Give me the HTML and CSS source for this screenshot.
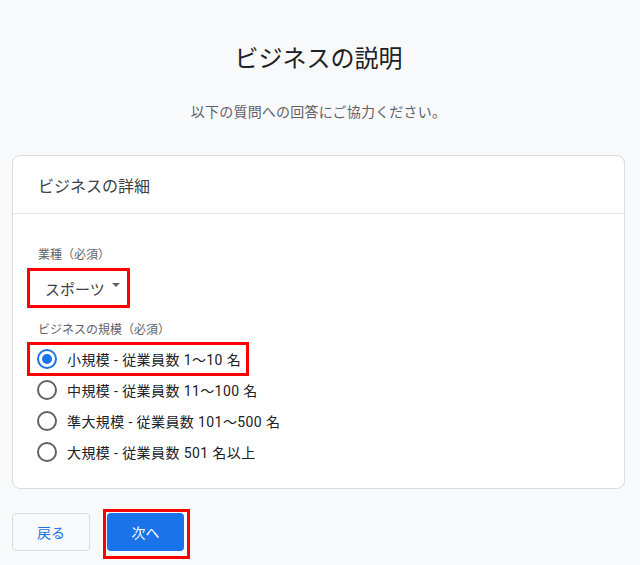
FILE: index.html
```html
<!DOCTYPE html>
<html lang="ja">
<head>
<meta charset="utf-8">
<link rel="stylesheet" href="styles.css">
</head>
<body>
<main class="page">
  <h1 class="title">ビジネスの説明</h1>
  <p class="subtitle">以下の質問への回答にご協力ください。</p>
  <section class="card">
    <div class="card-header">ビジネスの詳細</div>
    <div class="card-body">
      <div class="label">業種（必須）</div>
      <div class="dropdown">
        <span class="dropdown-text">スポーツ</span>
        <span class="caret"></span>
      </div>
      <div class="label label-size">ビジネスの規模（必須）</div>
      <div class="radios">
        <div class="radio-row highlighted"><span class="radio checked"></span><span class="radio-text">小規模 - 従業員数 1～10 名</span></div>
        <div class="radio-row"><span class="radio"></span><span class="radio-text">中規模 - 従業員数 11～100 名</span></div>
        <div class="radio-row"><span class="radio"></span><span class="radio-text">準大規模 - 従業員数 101～500 名</span></div>
        <div class="radio-row"><span class="radio"></span><span class="radio-text">大規模 - 従業員数 501 名以上</span></div>
      </div>
    </div>
  </section>
  <div class="actions">
    <button class="btn btn-back">戻る</button>
    <span class="next-wrap"><button class="btn btn-next">次へ</button></span>
  </div>
</main>
</body>
</html>
```
FILE: styles.css
```css
html, body {
  margin: 0;
  padding: 0;
  background: #f8f9fa;
  font-family: Roboto, "Noto Sans CJK JP", "Noto Sans", sans-serif;
}
.page {
  padding: 43px 15px 0 12px;
}
.title {
  margin: 0;
  text-align: center;
  font-size: 24px;
  line-height: 32px;
  font-weight: 400;
  color: #202124;
}
.subtitle {
  margin: 27px 0 0;
  text-align: center;
  font-size: 14px;
  line-height: 20px;
  letter-spacing: 0.2px;
  color: #5f6368;
}
.card {
  margin-top: 33px;
  background: #fff;
  border: 1px solid #dadce0;
  border-radius: 8px;
}
.card-header {
  height: 57px;
  display: flex;
  align-items: center;
  padding: 0 25px;
  font-size: 16px;
  color: #3c4043;
  border-bottom: 1px solid #e3e5e8;
}
.card-body {
  padding: 33px 25px 22px;
}
.label {
  font-size: 12px;
  line-height: 16px;
  color: #5f6368;
}
.label-size {
  margin-top: 14px;
}
.dropdown {
  margin: 5px 0 0 -11px;
  height: 34px;
  width: 82px;
  border: 3px solid #f00;
  display: flex;
  align-items: center;
  padding-left: 15px;
  box-sizing: content-box;
}
.dropdown-text {
  font-size: 15px;
  color: #3c4043;
}
.caret {
  margin-left: 7px;
  margin-top: -6px;
  width: 0;
  height: 0;
  border-left: 4px solid transparent;
  border-right: 4px solid transparent;
  border-top: 4px solid #5f6368;
}
.radios {
  margin: 7px 0 0 -8px;
  display: flex;
  flex-direction: column;
  gap: 3px;
}
.radio-row {
  height: 28px;
  display: flex;
  align-items: center;
  padding-left: 7px;
  align-self: flex-start;
  padding-right: 5px;
}
.radio-row.highlighted {
  outline: 3px solid #f00;
}
.radio {
  width: 16px;
  height: 16px;
  border: 2px solid #5f6368;
  border-radius: 50%;
  flex: none;
  position: relative;
}
.radio.checked {
  border-color: #1a73e8;
}
.radio.checked::after {
  content: "";
  position: absolute;
  left: 3px;
  top: 3px;
  width: 10px;
  height: 10px;
  border-radius: 50%;
  background: #1a73e8;
}
.radio-text {
  margin-left: 10px;
  font-size: 14px;
  letter-spacing: 0.4px;
  color: #202124;
}
.actions {
  margin-top: 24px;
  display: flex;
  align-items: flex-start;
  gap: 13px;
}
.btn {
  font-family: inherit;
  font-size: 14px;
  border-radius: 4px;
  cursor: pointer;
  height: 38px;
  padding: 0;
}
.btn-back {
  width: 78px;
  background: #f8f9fa;
  border: 1px solid #dadce0;
  color: #1a73e8;
}
.next-wrap {
  display: block;
  margin-top: -4px;
  border: 3px solid #f00;
  padding: 1px 3px 5px 1px;
}
.btn-next {
  display: block;
  width: 77px;
  background: #1a73e8;
  border: none;
  color: #fff;
}
```
